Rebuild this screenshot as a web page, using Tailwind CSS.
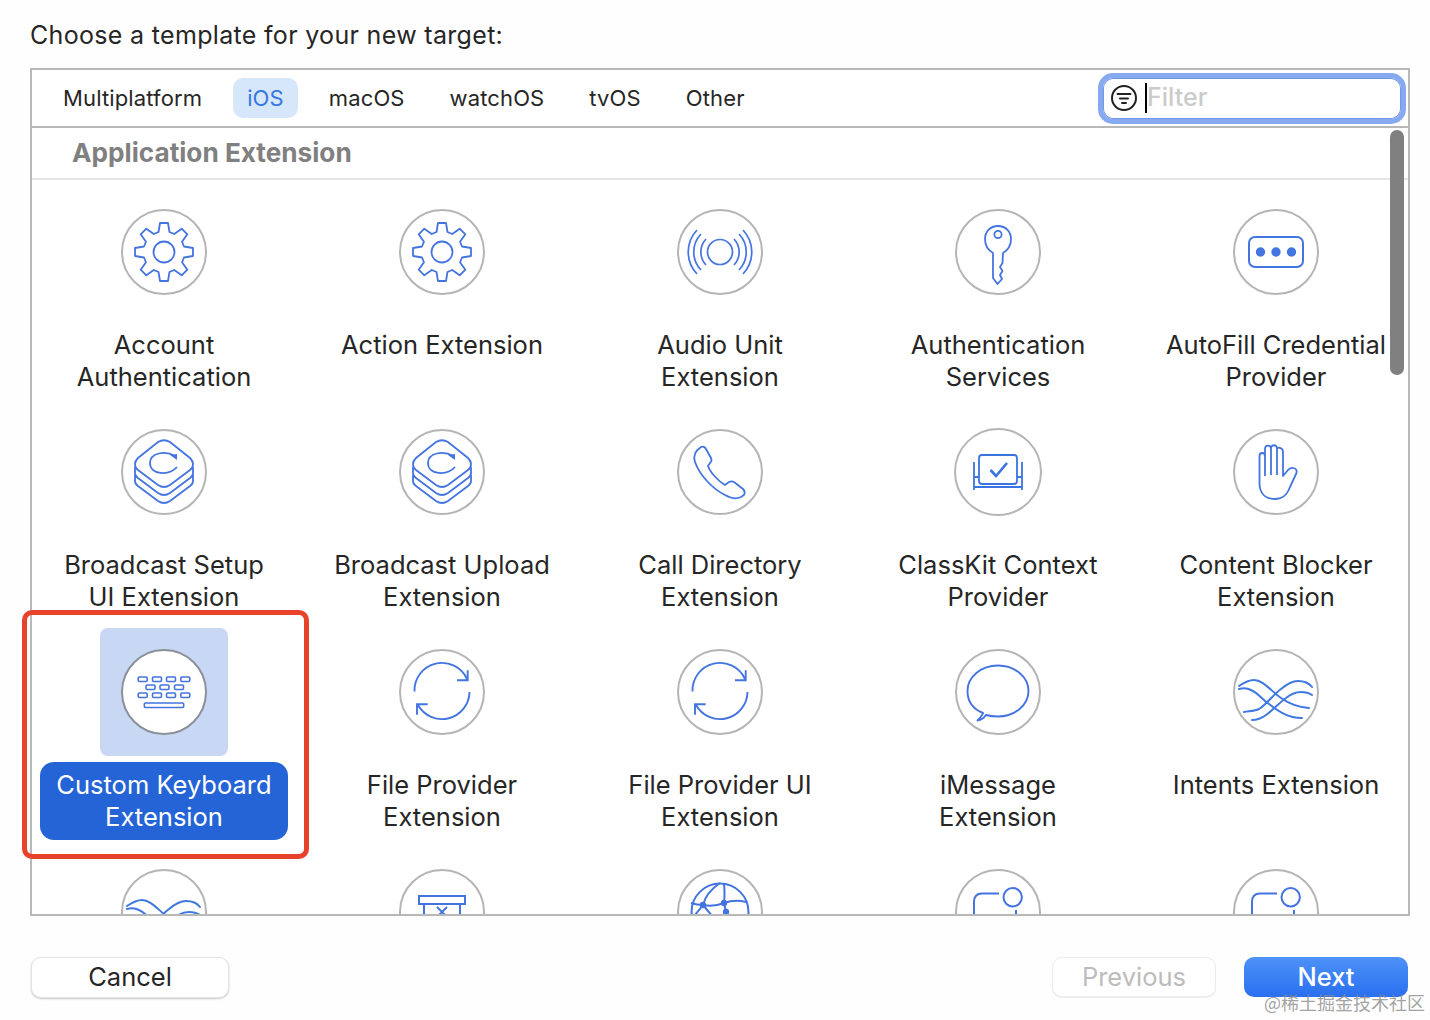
<!DOCTYPE html>
<html lang="en">
<head>
<meta charset="utf-8">
<title>Choose a template</title>
<script src="https://cdn.jsdelivr.net/npm/@tailwindcss/browser@4"></script>
</head>
<body class="bg-white">
<svg width="0" height="0" class="absolute">
  <defs>
    <symbol id="gear" viewBox="0 0 86 86"><g fill="none" stroke="#4474e0" stroke-width="1.8" stroke-linejoin="round" transform="translate(43 43)"><path d="M-5.5 -20L-4 -29L4 -29L5.5 -20L10.25 -18.03L17.68 -23.33L23.33 -17.68L18.03 -10.25L20 -5.5L29 -4L29 4L20 5.5L18.03 10.25L23.33 17.68L17.68 23.33L10.25 18.03L5.5 20L4 29L-4 29L-5.5 20L-10.25 18.03L-17.68 23.33L-23.33 17.68L-18.03 10.25L-20 5.5L-29 4L-29 -4L-20 -5.5L-18.03 -10.25L-23.33 -17.68L-17.68 -23.33L-10.25 -18.03Z"/><circle r="10.5"/></g></symbol>
    <symbol id="audio" viewBox="0 0 86 86"><g fill="none" stroke="#4474e0" stroke-width="1.7"><circle cx="43" cy="43" r="12.5"/><path d="M20 21A32 32 0 0 0 20 65M24 25A26 26 0 0 0 24 61M29 30A19 19 0 0 0 29 56M66 21A32 32 0 0 1 66 65M62 25A26 26 0 0 1 62 61M57 30A19 19 0 0 1 57 56"/></g></symbol>
    <symbol id="key" viewBox="0 0 86 86"><g fill="none" stroke="#4474e0" stroke-width="1.8" stroke-linejoin="round"><path d="M43 17C35 17 30 23 30 30C30 36 33 41 38 44V69L42.5 75L47 70L45 66L47.5 62L45 58L47.5 54L48 44C53 41 56 36 56 30C56 23 51 17 43 17Z"/><circle cx="43" cy="25.5" r="3.6"/></g></symbol>
    <symbol id="dots" viewBox="0 0 86 86"><rect x="16" y="28" width="54" height="30" rx="6" fill="none" stroke="#4474e0" stroke-width="2"/><circle cx="27.5" cy="43" r="4.7" fill="#4474e0"/><circle cx="43" cy="43" r="4.7" fill="#4474e0"/><circle cx="58.5" cy="43" r="4.7" fill="#4474e0"/></symbol>
    <symbol id="stack" viewBox="0 0 86 86"><g fill="none" stroke="#4474e0" stroke-width="1.8"><path d="M37 13Q43 9.5 49 13L69 29Q72 32 72 35Q72 39 69 41L49 56Q43 60 37 56L17 41Q14 39 14 35Q14 32 17 29Z"/><path d="M14 38V44Q14 47 17 49L37 64Q43 68 49 64L69 49Q72 47 72 44V38"/><path d="M14 46V52Q14 55 17 57L37 72Q43 76 49 72L69 57Q72 55 72 52V46"/><path d="M54 27C44 21 29 24 29 34C29 46 48 47 56 38"/></g><path d="M49 26L56 25L56 31Z" fill="#4474e0"/></symbol>
    <symbol id="phone" viewBox="0 0 86 86"><path fill="none" stroke="#4474e0" stroke-width="1.8" d="M24 18C26 17 28 18 29 20L34 29C35 31 34 33 33 34L31 37C33 43 41 52 48 56L52 53C54 52 55 52 57 53L66 60C68 62 68 64 67 66L64 68C60 70 55 70 48 66C36 60 23 47 18 33C16 27 18 22 24 18Z"/></symbol>
    <symbol id="class" viewBox="0 0 86 86"><g fill="none" stroke="#3a74e0" stroke-width="1.8"><rect x="24" y="26" width="38" height="29" rx="3"/><path d="M19 33V61M67 33V61M19 58H67M24 48H19M62 48H67"/><path d="M35.5 41L41 47L52 34" stroke-width="2.6"/></g></symbol>
    <symbol id="hand" viewBox="0 0 86 86"><path fill="none" stroke="#4474e0" stroke-width="1.8" stroke-linejoin="round" d="M26.5 27C26.5 23 32 23 32 27V20C32 15.5 38 15.5 38 20C38 15 44 15 44 20C44 18 50 18 50 23V47L55 41C58 37 66 39 63 45L57 58C54 66 50 70 42 70C32 70 26.5 64 26.5 54ZM32 27V47M38 20V46M44 20V46"/></symbol>
    <symbol id="kbd" viewBox="0 0 86 86"><g fill="none" stroke="#4474e0" stroke-width="1.6"><rect x="17.2" y="28" width="9" height="4.5" rx="1.2"/><rect x="31.5" y="28" width="9" height="4.5" rx="1.2"/><rect x="45.5" y="28" width="9" height="4.5" rx="1.2"/><rect x="59.8" y="28" width="9" height="4.5" rx="1.2"/><rect x="25" y="36" width="9" height="4.5" rx="1.2"/><rect x="39" y="36" width="9" height="4.5" rx="1.2"/><rect x="53.5" y="36" width="9" height="4.5" rx="1.2"/><rect x="17.2" y="44" width="9" height="4.5" rx="1.2"/><rect x="31.5" y="44" width="9" height="4.5" rx="1.2"/><rect x="45.5" y="44" width="9" height="4.5" rx="1.2"/><rect x="59.8" y="44" width="9" height="4.5" rx="1.2"/><rect x="23.3" y="54" width="39.4" height="4.5" rx="1.2"/></g></symbol>
    <symbol id="sync" viewBox="0 0 86 86"><path fill="none" stroke="#4474e0" stroke-width="1.9" d="M15.5 42.5A27.5 27.5 0 0 1 68 30M58 31.3H68.7V21.3M70.5 43A27.5 27.5 0 0 1 19 56M28.7 55.3H18V65.7"/></symbol>
    <symbol id="chat" viewBox="0 0 86 86"><path fill="none" stroke="#4474e0" stroke-width="1.9" stroke-linejoin="round" d="M28 64C18 60 12.5 52 12.5 42C12.5 28 26 16.5 43 16.5C60 16.5 73.5 28 73.5 42C73.5 56 60 67.5 43 67.5C38 67.5 34.5 67 31 66C29 69 26 71 22.5 71.5C25 69 27 67 28 64Z"/></symbol>
    <symbol id="waves" viewBox="0 0 86 86"><g fill="none" stroke="#3f78e0" stroke-width="2" stroke-linecap="round"><path d="M6 37C12 33 17 31 21 31C30 31 38 42 48 49C55 54 63 58 76 59"/><path d="M6 40C10 39 14 39 18 41C25 44 30 51 36 55C44 61 54 69 69 69"/><path d="M11 63C17 62 22 62 26 60C33 56 40 46 48 40C54 35 60 32 65 32C71 32 76 34 79 38"/><path d="M19 71C24 71 29 69 33 66C40 61 46 54 53 49C58 45 63 43 68 43C72 43 76 44 79 46"/></g></symbol>
    <symbol id="archive" viewBox="0 0 86 86"><g fill="none" stroke="#4474e0" stroke-width="2"><rect x="20" y="27" width="46" height="8"/><path d="M25 35V62M61 35V62M38 38L48 48M48 38L38 48"/></g></symbol>
    <symbol id="globe" viewBox="0 0 86 86"><g fill="none" stroke="#4474e0" stroke-width="2"><circle cx="43" cy="43" r="28.5"/><path d="M43 14C34 20 28 28 26 36M47 15Q48 25 47 34M26 36Q37 38 47 34M14 34Q20 36 26 36M47 34Q58 30 69 33M47 34L49 43M26 36L18 46M26 36L36 48M15 45L24 52"/></g><circle cx="26" cy="36" r="3.2" fill="#4474e0"/><circle cx="47" cy="34" r="3.2" fill="#4474e0"/><circle cx="49" cy="43" r="3.2" fill="#4474e0"/></symbol>
    <symbol id="clip" viewBox="0 0 86 86"><g fill="none" stroke="#4474e0" stroke-width="2"><circle cx="57.7" cy="28.3" r="9.2"/><path d="M44 24.5H27Q19 24.5 19 33V70M61 41V62"/></g></symbol>
  </defs>
</svg>

<div class="relative w-[1430px] h-[1020px] overflow-hidden bg-[#fefefe] text-[#262626] font-['Inter','Liberation_Sans',sans-serif]">
  <h1 class="h-[68px] pl-[30px] pt-[3px] flex items-center text-[25px] font-normal tracking-[0.32px]">Choose a template for your new target:</h1>

  <div class="ml-[30px] w-[1380px] h-[848px] border-2 border-[#b8b8b8] overflow-hidden bg-white">
    <div class="h-[58px] border-b-2 border-[#b8b8b8] flex items-center justify-between pl-[31px] pr-[2px] text-[22px] tracking-[0.13px]">
      <div class="flex items-center gap-[45px]">
        <span>Multiplatform</span>
        <span class="-mx-[14px] px-[14px] h-[40px] flex items-center rounded-[10px] bg-[#d6e6fb] text-[#3478e0]">iOS</span>
        <span>macOS</span>
        <span>watchOS</span>
        <span>tvOS</span>
        <span>Other</span>
      </div>
      <div class="w-[308px] h-[51px] rounded-[15px] border-[5px] border-[#86a9ef] shadow-[inset_0_0_0_1px_#6f96e8] bg-white flex items-center pl-[7px]">
        <svg width="28" height="28" viewBox="0 0 28 28" fill="none" stroke="#222" stroke-width="2" stroke-linecap="round"><circle cx="14" cy="14" r="12"/><path d="M7.5 10H20.5M10 14.5H18M12 19H16"/></svg>
        <span class="ml-[7px] w-[2px] h-[30px] bg-black"></span>
        <span class="text-[25px] font-medium text-[#cbcbcb] tracking-normal">Filter</span>
      </div>
    </div>

    <div class="h-[52px] border-b-2 border-[#e6e6e6] pl-[40px] flex items-center text-[26.2px] font-bold text-[#808080]">Application Extension</div>

    <div class="pt-[8px] -ml-[7px] grid grid-cols-[repeat(5,278px)] auto-rows-[220px] text-[25.5px] leading-[32px] text-center whitespace-nowrap">

      <div class="flex flex-col items-center"><div class="size-[128px] flex items-center justify-center"><div class="size-[86px] rounded-full border-2 border-[#b5b5b5] bg-white flex items-center justify-center"><svg width="86" height="86" class="shrink-0"><use href="#gear"/></svg></div></div><div class="mt-[6px] px-[16px] py-[7px]">Account<br>Authentication</div></div>
      <div class="flex flex-col items-center"><div class="size-[128px] flex items-center justify-center"><div class="size-[86px] rounded-full border-2 border-[#b5b5b5] bg-white flex items-center justify-center"><svg width="86" height="86" class="shrink-0"><use href="#gear"/></svg></div></div><div class="mt-[6px] px-[16px] py-[7px]">Action Extension</div></div>
      <div class="flex flex-col items-center"><div class="size-[128px] flex items-center justify-center"><div class="size-[86px] rounded-full border-2 border-[#b5b5b5] bg-white flex items-center justify-center"><svg width="86" height="86" class="shrink-0"><use href="#audio"/></svg></div></div><div class="mt-[6px] px-[16px] py-[7px]">Audio Unit<br>Extension</div></div>
      <div class="flex flex-col items-center"><div class="size-[128px] flex items-center justify-center"><div class="size-[86px] rounded-full border-2 border-[#b5b5b5] bg-white flex items-center justify-center"><svg width="86" height="86" class="shrink-0"><use href="#key"/></svg></div></div><div class="mt-[6px] px-[16px] py-[7px]">Authentication<br>Services</div></div>
      <div class="flex flex-col items-center"><div class="size-[128px] flex items-center justify-center"><div class="size-[86px] rounded-full border-2 border-[#b5b5b5] bg-white flex items-center justify-center"><svg width="86" height="86" class="shrink-0"><use href="#dots"/></svg></div></div><div class="mt-[6px] px-[16px] py-[7px]">AutoFill Credential<br>Provider</div></div>

      <div class="flex flex-col items-center"><div class="size-[128px] flex items-center justify-center"><div class="size-[86px] rounded-full border-2 border-[#b5b5b5] bg-white flex items-center justify-center"><svg width="86" height="86" class="shrink-0"><use href="#stack"/></svg></div></div><div class="mt-[6px] px-[16px] py-[7px]">Broadcast Setup<br>UI Extension</div></div>
      <div class="flex flex-col items-center"><div class="size-[128px] flex items-center justify-center"><div class="size-[86px] rounded-full border-2 border-[#b5b5b5] bg-white flex items-center justify-center"><svg width="86" height="86" class="shrink-0"><use href="#stack"/></svg></div></div><div class="mt-[6px] px-[16px] py-[7px]">Broadcast Upload<br>Extension</div></div>
      <div class="flex flex-col items-center"><div class="size-[128px] flex items-center justify-center"><div class="size-[86px] rounded-full border-2 border-[#b5b5b5] bg-white flex items-center justify-center"><svg width="86" height="86" class="shrink-0"><use href="#phone"/></svg></div></div><div class="mt-[6px] px-[16px] py-[7px]">Call Directory<br>Extension</div></div>
      <div class="flex flex-col items-center"><div class="size-[128px] flex items-center justify-center"><div class="size-[88px] rounded-full border-2 border-[#b5b5b5] bg-white flex items-center justify-center"><svg width="86" height="86" class="shrink-0"><use href="#class"/></svg></div></div><div class="mt-[6px] px-[16px] py-[7px]">ClassKit Context<br>Provider</div></div>
      <div class="flex flex-col items-center"><div class="size-[128px] flex items-center justify-center"><div class="size-[86px] rounded-full border-2 border-[#b5b5b5] bg-white flex items-center justify-center"><svg width="86" height="86" class="shrink-0"><use href="#hand"/></svg></div></div><div class="mt-[6px] px-[16px] py-[7px]">Content Blocker<br>Extension</div></div>

      <div class="flex flex-col items-center"><div class="size-[128px] rounded-[8px] bg-[#c8d7f4] flex items-center justify-center"><div class="size-[86px] rounded-full border-2 border-[#8b9099] bg-white flex items-center justify-center"><svg width="86" height="86" class="shrink-0"><use href="#kbd"/></svg></div></div><div class="mt-[6px] w-[248px] py-[7px] rounded-[14px] bg-[#2464d6] text-white">Custom Keyboard<br>Extension</div></div>
      <div class="flex flex-col items-center"><div class="size-[128px] flex items-center justify-center"><div class="size-[86px] rounded-full border-2 border-[#b5b5b5] bg-white flex items-center justify-center"><svg width="86" height="86" class="shrink-0"><use href="#sync"/></svg></div></div><div class="mt-[6px] px-[16px] py-[7px]">File Provider<br>Extension</div></div>
      <div class="flex flex-col items-center"><div class="size-[128px] flex items-center justify-center"><div class="size-[86px] rounded-full border-2 border-[#b5b5b5] bg-white flex items-center justify-center"><svg width="86" height="86" class="shrink-0"><use href="#sync"/></svg></div></div><div class="mt-[6px] px-[16px] py-[7px]">File Provider UI<br>Extension</div></div>
      <div class="flex flex-col items-center"><div class="size-[128px] flex items-center justify-center"><div class="size-[86px] rounded-full border-2 border-[#b5b5b5] bg-white flex items-center justify-center"><svg width="86" height="86" class="shrink-0"><use href="#chat"/></svg></div></div><div class="mt-[6px] px-[16px] py-[7px]">iMessage<br>Extension</div></div>
      <div class="flex flex-col items-center"><div class="size-[128px] flex items-center justify-center"><div class="size-[86px] rounded-full border-2 border-[#b5b5b5] bg-white flex items-center justify-center"><svg width="86" height="86" class="shrink-0"><use href="#waves"/></svg></div></div><div class="mt-[6px] px-[16px] py-[7px]">Intents Extension</div></div>

      <div class="flex flex-col items-center"><div class="size-[128px] flex items-center justify-center"><div class="size-[86px] rounded-full border-2 border-[#b5b5b5] bg-white flex items-center justify-center"><svg width="86" height="86" class="shrink-0"><use href="#waves"/></svg></div></div></div>
      <div class="flex flex-col items-center"><div class="size-[128px] flex items-center justify-center"><div class="size-[86px] rounded-full border-2 border-[#b5b5b5] bg-white flex items-center justify-center"><svg width="86" height="86" class="shrink-0"><use href="#archive"/></svg></div></div></div>
      <div class="flex flex-col items-center"><div class="size-[128px] flex items-center justify-center"><div class="size-[86px] rounded-full border-2 border-[#b5b5b5] bg-white flex items-center justify-center"><svg width="86" height="86" class="shrink-0"><use href="#globe"/></svg></div></div></div>
      <div class="flex flex-col items-center"><div class="size-[128px] flex items-center justify-center"><div class="size-[86px] rounded-full border-2 border-[#b5b5b5] bg-white flex items-center justify-center"><svg width="86" height="86" class="shrink-0"><use href="#clip"/></svg></div></div></div>
      <div class="flex flex-col items-center"><div class="size-[128px] flex items-center justify-center"><div class="size-[86px] rounded-full border-2 border-[#b5b5b5] bg-white flex items-center justify-center"><svg width="86" height="86" class="shrink-0"><use href="#clip"/></svg></div></div></div>
    </div>
  </div>

  <div class="mt-[41px] pl-[31px] pr-[22px] flex justify-between text-[25.5px]">
    <button class="w-[198px] h-[41px] rounded-[10px] bg-white text-[#262626] border border-[#e4e4e4] shadow-[0_1px_2px_rgba(0,0,0,0.22)]">Cancel</button>
    <div class="flex gap-[28px]">
      <button class="w-[164px] h-[40px] rounded-[10px] bg-white text-[#bcbcbc] border border-[#ececec] shadow-[0_1px_1px_rgba(0,0,0,0.07)]">Previous</button>
      <button class="w-[164px] h-[40px] rounded-[10px] bg-gradient-to-b from-[#4d92f8] to-[#2a6ff0] text-white font-medium">Next</button>
    </div>
  </div>

  <div class="absolute left-[1390px] top-[130px] w-[14px] h-[245px] rounded-full bg-[#808080]"></div>
  <div class="absolute left-[22px] top-[610px] w-[287px] h-[249px] rounded-[10px] border-[5px] border-[#e8432a]"></div>
  <div class="absolute left-[1264px] top-[990px] text-[18px] leading-[24px] text-[#8a8a8a]/80 whitespace-nowrap font-['Noto_Sans_CJK_SC',sans-serif]">@稀土掘金技术社区</div>
</div>
</body>
</html>
